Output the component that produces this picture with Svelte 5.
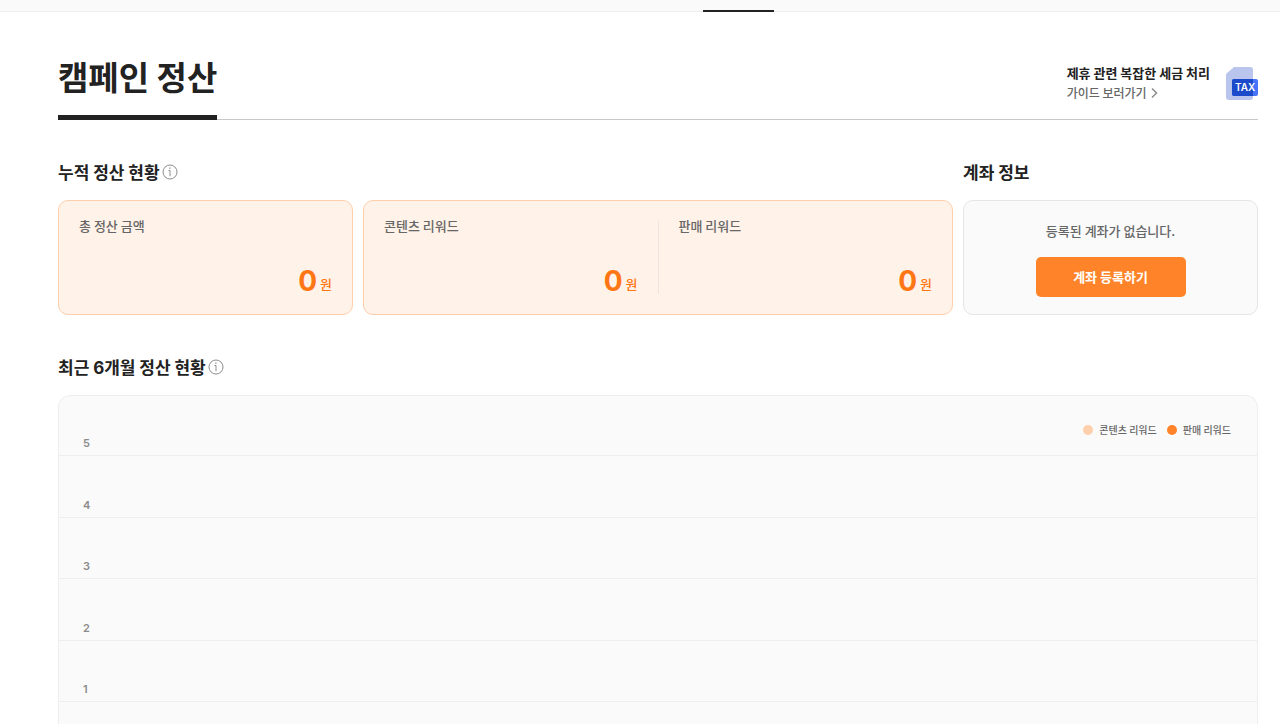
<script>
	const total = { label: "총 정산 금액", amount: 0 };
	const rewards = [
		{ label: "콘텐츠 리워드", amount: 0 },
		{ label: "판매 리워드", amount: 0 },
	];
	const legend = [
		{ label: "콘텐츠 리워드", color: "#ffceab" },
		{ label: "판매 리워드", color: "#ff8429" },
	];
	const ticks = [5, 4, 3, 2, 1];
</script>

{#snippet info(label)}
	<button class="info" aria-label={label}>
		<svg width="16" height="16" viewBox="0 0 16 16" fill="none" stroke="#8c8c8c">
			<circle cx="8" cy="8" r="7" />
			<path d="M6.5 6.5H8V12.2" />
			<path d="M7.2 4.2H8.5" stroke-width="1.2" />
		</svg>
	</button>
{/snippet}

{#snippet amountBox(item)}
	<div class="amount-box">
		<h3>{item.label}</h3>
		<p class="amount"><strong>{item.amount}</strong><span>원</span></p>
	</div>
{/snippet}

<div class="tabbar">
	<div class="tab-active"></div>
</div>

<main>
	<header>
		<h1>캠페인 정산</h1>
		<a class="guide" href="#guide">
			<span class="guide-text">
				<b>제휴 관련 복잡한 세금 처리</b>
				<span class="guide-link">
					가이드 보러가기
					<svg width="7" height="12" viewBox="0 0 7 12" fill="none" stroke="#8c8c8c" stroke-width="1.5">
						<path d="M1 1.5L5.5 6L1 10.5" />
					</svg>
				</span>
			</span>
			<svg width="32" height="34" viewBox="0 0 32 34">
				<path d="M8 1H24a3 3 0 0 1 3 3V31a3 3 0 0 1-3 3H3a3 3 0 0 1-3-3V8Z" fill="#b9c5ec" />
				<rect x="6" y="13" width="26" height="17" rx="2" fill="#4873fb" />
				<path d="M8 13H27V30H8a2 2 0 0 1-2-2V15a2 2 0 0 1 2-2Z" fill="#1b4bcb" />
				<text x="9" y="25" fill="#fff" font-family="Inter, sans-serif" font-size="10" font-weight="600">TAX</text>
			</svg>
		</a>
	</header>

	<div class="summary">
		<section class="totals">
			<h2>누적 정산 현황 {@render info("누적 정산 현황 안내")}</h2>
			<div class="cards">
				<div class="card">{@render amountBox(total)}</div>
				<div class="card">
					{#each rewards as reward, i}
						{#if i > 0}<div class="divider"></div>{/if}
						{@render amountBox(reward)}
					{/each}
				</div>
			</div>
		</section>

		<section class="account">
			<h2>계좌 정보</h2>
			<div class="account-card">
				<p>등록된 계좌가 없습니다.</p>
				<button class="register">계좌 등록하기</button>
			</div>
		</section>
	</div>

	<section>
		<h2>
			<span>최근 <span class="num">6</span>개월 정산 현황</span>
			{@render info("최근 6개월 정산 현황 안내")}
		</h2>
		<div class="chart">
			<ul class="legend">
				{#each legend as item}
					<li><i style="background: {item.color}"></i>{item.label}</li>
				{/each}
			</ul>
			<div class="plot">
				{#each ticks as tick}
					<div class="row"><span>{tick}</span></div>
				{/each}
			</div>
		</div>
	</section>
</main>

<style>
	:global(body) {
		margin: 0;
		background: #fff;
		color: #222;
		font-family: "Noto Sans CJK KR", sans-serif;
	}
	h1,
	h2,
	h3,
	p,
	ul {
		margin: 0;
		padding: 0;
	}
	button {
		font-family: inherit;
		border: 0;
		padding: 0;
		cursor: pointer;
	}

	.tabbar {
		display: flex;
		align-items: flex-end;
		height: 12px;
		box-sizing: border-box;
		padding-left: calc(50% + 63px);
		background: #fafafa;
		box-shadow: inset 0 -1px #eee;
	}
	.tab-active {
		width: 71px;
		height: 2px;
		background: #222;
	}

	main {
		padding: 0 22px 0 58px;
	}
	header {
		display: flex;
		justify-content: space-between;
		align-items: flex-end;
		padding-top: 40px;
		border-bottom: 1px solid #c8c8c8;
	}
	h1 {
		margin-bottom: -1px;
		padding-bottom: 15px;
		border-bottom: 5px solid #222;
		font-size: 33px;
		line-height: 48px;
		font-weight: 700;
	}
	.guide {
		display: flex;
		align-items: center;
		gap: 16px;
		margin-bottom: 16px;
		color: #222;
		text-decoration: none;
	}
	.guide-text {
		display: flex;
		flex-direction: column;
		font-size: 13px;
		line-height: 20px;
	}
	.guide-link {
		display: flex;
		align-items: center;
		gap: 4px;
		color: #666;
		font-size: 12px;
		font-family: "Noto Sans CJK KR Medium", "Noto Sans CJK KR", sans-serif;
		font-weight: 500;
	}

	.summary {
		display: flex;
		gap: 10px;
	}
	.totals {
		flex: 1;
	}
	.account {
		width: 295px;
	}
	h2 {
		display: flex;
		align-items: center;
		gap: 2px;
		margin: 40px 0 16px;
		font-size: 17px;
		line-height: 24px;
		font-weight: 700;
	}
	.num {
		font-family: Inter, sans-serif;
		line-height: 16px;
	}
	.info {
		display: flex;
		background: none;
	}
	.cards {
		display: grid;
		grid-template-columns: 1fr 2fr;
		gap: 10px;
	}
	.card,
	.account-card {
		display: flex;
		height: 115px;
		box-sizing: border-box;
		border: 1px solid #ffceab;
		border-radius: 10px;
		background: #fff2e8;
	}
	.amount-box {
		display: flex;
		flex: 1;
		flex-direction: column;
		justify-content: space-between;
		padding: 15px 20px;
	}
	.divider {
		width: 1px;
		margin: 20px 0;
		background: #eee4e2;
	}
	h3,
	.account-card p {
		color: #666;
		font-size: 13px;
		font-family: "Noto Sans CJK KR Medium", "Noto Sans CJK KR", sans-serif;
		line-height: 20px;
		font-weight: 500;
	}
	.amount {
		display: flex;
		justify-content: flex-end;
		align-items: flex-end;
		gap: 3px;
		color: #ff7714;
		font-size: 13px;
		font-family: "Noto Sans CJK KR Medium", "Noto Sans CJK KR", sans-serif;
		line-height: 30px;
		font-weight: 500;
	}
	.amount strong {
		font-size: 28px;
		font-family: Inter, sans-serif;
		line-height: 36px;
	}

	.account-card {
		flex-direction: column;
		align-items: center;
		justify-content: flex-end;
		gap: 16px;
		padding-bottom: 17px;
		border-color: #e5e5e5;
		background: #fafafa;
	}
	.register {
		width: 150px;
		height: 40px;
		padding-bottom: 2px;
		border-radius: 5px;
		background: #ff8429;
		color: #fff;
		font-size: 13px;
		font-weight: 700;
	}

	.chart {
		position: relative;
		padding-bottom: 60px;
		border: 1px solid #eee;
		border-radius: 12px;
		background: #fafafa;
	}
	.legend {
		position: absolute;
		top: 24px;
		right: 26px;
		display: flex;
		gap: 10px;
		list-style: none;
		color: #666;
		font-size: 10px;
		font-family: "Noto Sans CJK KR Medium", "Noto Sans CJK KR", sans-serif;
		line-height: 20px;
		font-weight: 500;
	}
	.legend li {
		display: flex;
		align-items: center;
		gap: 6px;
	}
	.legend i {
		width: 10px;
		height: 10px;
		border-radius: 50%;
	}
	.plot {
		display: grid;
		grid-template-rows: 60px;
		grid-auto-rows: 1fr;
		height: 306px;
	}
	.row {
		display: flex;
		align-items: flex-end;
		padding: 0 24px 4px;
		border-bottom: 1px solid #eee;
		color: #8c8c8c;
		font-size: 11px;
		font-family: Inter, sans-serif;
		line-height: 16px;
		font-weight: 600;
	}
</style>
